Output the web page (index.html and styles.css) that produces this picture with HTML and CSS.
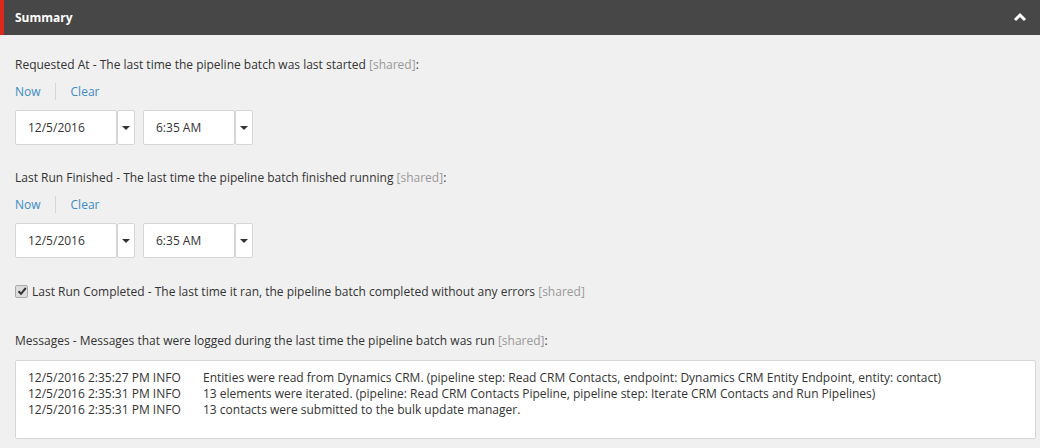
FILE: index.html
```html
<!DOCTYPE html>
<html>
<head>
<meta charset="utf-8">
<link rel="stylesheet" href="styles.css">
</head>
<body>
<div class="section">
  <div class="section-header">
    <span class="section-title">Summary</span>
    <svg class="chevron" width="14" height="10" viewBox="0 0 14 10"><path d="M2 8 L7 3 L12 8" fill="none" stroke="#fff" stroke-width="3"/></svg>
  </div>
  <div class="section-body">
    <div class="field">
      <div class="label">Requested At - The last time the pipeline batch was last started <span class="shared">[shared]</span>:</div>
      <div class="links"><a class="link">Now</a><span class="sep"></span><a class="link">Clear</a></div>
      <div class="pickers">
        <div class="picker date"><div class="input">12/5/2016</div><div class="btn"><span class="caret"></span></div></div>
        <div class="picker time"><div class="input">6:35 AM</div><div class="btn"><span class="caret"></span></div></div>
      </div>
    </div>
    <div class="field second">
      <div class="label">Last Run Finished - The last time the pipeline batch finished running <span class="shared">[shared]</span>:</div>
      <div class="links"><a class="link">Now</a><span class="sep"></span><a class="link">Clear</a></div>
      <div class="pickers">
        <div class="picker date"><div class="input">12/5/2016</div><div class="btn"><span class="caret"></span></div></div>
        <div class="picker time"><div class="input">6:35 AM</div><div class="btn"><span class="caret"></span></div></div>
      </div>
    </div>
    <div class="check-row">
      <span class="checkbox"><svg width="10" height="10" viewBox="0 0 10 10"><path d="M1.5 5.2 L4 7.8 L8.8 2" fill="none" stroke="#333" stroke-width="2"/></svg></span>
      <span class="label-inline">Last Run Completed - The last time it ran, the pipeline batch completed without any errors <span class="shared">[shared]</span></span>
    </div>
    <div class="field messages">
      <div class="label">Messages - Messages that were logged during the last time the pipeline batch was run <span class="shared">[shared]</span>:</div>
      <div class="log">
        <div class="log-line"><span class="ts">12/5/2016 2:35:27 PM INFO</span><span class="msg">Entities were read from Dynamics CRM. (pipeline step: Read CRM Contacts, endpoint: Dynamics CRM Entity Endpoint, entity: contact)</span></div>
        <div class="log-line"><span class="ts">12/5/2016 2:35:31 PM INFO</span><span class="msg">13 elements were iterated. (pipeline: Read CRM Contacts Pipeline, pipeline step: Iterate CRM Contacts and Run Pipelines)</span></div>
        <div class="log-line"><span class="ts">12/5/2016 2:35:31 PM INFO</span><span class="msg">13 contacts were submitted to the bulk update manager.</span></div>
      </div>
    </div>
  </div>
</div>
</body>
</html>
```

FILE: styles.css
```css
html, body {
  margin: 0;
  padding: 0;
  background: #f0f0f0;
}
body {
  font-family: "Open Sans", "Liberation Sans", sans-serif;
  font-size: 12px;
  color: #333;
  width: 1040px;
  height: 448px;
  overflow: hidden;
}
.section-header {
  height: 35px;
  background: #474747;
  border-left: 4px solid #dc291e;
  box-sizing: border-box;
  display: flex;
  align-items: center;
  justify-content: space-between;
  padding: 0 10px 0 11px;
}
.section-title {
  color: #fff;
  font-weight: bold;
  font-size: 12px;
  margin-top: -1px;
}
.chevron {
  margin-top: -1px;
  margin-right: 3px;
}
.section-body {
  padding: 21px 5px 0 15px;
}
.label {
  line-height: 18px;
  height: 18px;
}
.shared {
  color: #999;
}
.links {
  display: flex;
  align-items: center;
  margin-top: 8px;
  height: 18px;
}
.link {
  color: #3d8bc3;
  cursor: pointer;
}
.sep {
  width: 1px;
  height: 17px;
  background: #d6d6d6;
  margin: 0 15px 0 14px;
}
.pickers {
  display: flex;
  margin-top: 10px;
  gap: 8px;
}
.picker {
  display: flex;
  height: 35px;
}
.picker .input {
  background: #fff;
  border: 1px solid #d6d6d6;
  border-radius: 2px;
  box-sizing: border-box;
  height: 35px;
  line-height: 33px;
  padding-left: 12px;
}
.date .input { width: 102px; }
.time .input { width: 92px; }
.picker .btn {
  width: 18px;
  height: 35px;
  background: #fff;
  border: 1px solid #d6d6d6;
  border-radius: 2px;
  box-sizing: border-box;
  display: flex;
  align-items: center;
  justify-content: center;
}
.caret {
  width: 0;
  height: 0;
  border-left: 4px solid transparent;
  border-right: 4px solid transparent;
  border-top: 4px solid #333;
}
.field.second {
  margin-top: 24px;
}
.check-row {
  display: flex;
  align-items: center;
  margin-top: 24px;
  height: 18px;
}
.checkbox {
  width: 11px;
  height: 11px;
  border: 1px solid #aaa;
  border-radius: 2px;
  background: #ddd;
  display: flex;
  align-items: center;
  justify-content: center;
  margin-right: 4px;
}
.field.messages {
  margin-top: 32px;
}
.log {
  margin-top: 10px;
  background: #fff;
  border: 1px solid #d6d6d6;
  border-radius: 2px;
  width: 1021px;
  height: 79px;
  box-sizing: border-box;
  padding: 9px 12px;
}
.log-line {
  display: flex;
  line-height: 16px;
}
.ts {
  width: 175px;
  flex: none;
}
```
